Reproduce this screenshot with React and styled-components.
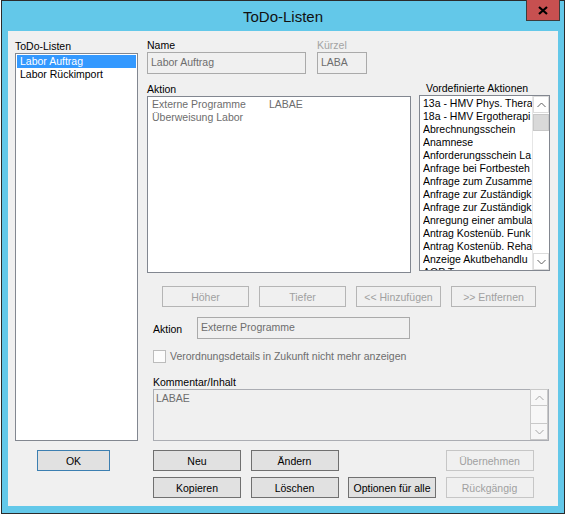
import React from 'react'
import styled, { createGlobalStyle } from 'styled-components'

const todoLists = ['Labor Auftrag', 'Labor Rückimport']

// the list is narrower than the entries, only the visible part is kept
const predefined = [
    '13a - HMV Phys. Thera',
    '18a - HMV Ergotherapi',
    'Abrechnungsschein',
    'Anamnese',
    'Anforderungsschein La',
    'Anfrage bei Fortbesteh',
    'Anfrage zum Zusamme',
    'Anfrage zur Zuständigk',
    'Anfrage zur Zuständigk',
    'Anregung einer ambula',
    'Antrag Kostenüb. Funk',
    'Antrag Kostenüb. Reha',
    'Anzeige Akutbehandlu',
    'AOP T',
]

const actions = [
    { name: 'Externe Programme', code: 'LABAE' },
    { name: 'Überweisung Labor', code: '' },
]

const Chevron = ({ down, color }) => (
    <svg width="9" height="6" viewBox="0 0 9 6">
        <polyline
            points={down ? '0.5,1 4.5,5 8.5,1' : '0.5,5 4.5,1 8.5,5'}
            fill="none"
            stroke={color}
            strokeWidth="1"
        />
    </svg>
)

const App = () => {
    return (
        <>
            <GlobalStyle />
            <Window>
                <TitleBar>
                    <span />
                    <Title>ToDo-Listen</Title>
                    <CloseButton>
                        <svg width="10" height="9" viewBox="0 0 10 9">
                            <path d="M1 1 L9 8 M9 1 L1 8" stroke="#000" strokeWidth="2.2" />
                        </svg>
                    </CloseButton>
                </TitleBar>
                <Client>
                    <Column>
                        <Label lh={14}>ToDo-Listen</Label>
                        <ListBox h={388} pad="1px">
                            {todoLists.map((item, i) => (
                                <TodoItem key={item} selected={i === 0}>{item}</TodoItem>
                            ))}
                        </ListBox>
                    </Column>

                    <Column>
                        <Row>
                            <Column>
                                <Label>Name</Label>
                                <TextBox w={159}>Labor Auftrag</TextBox>
                            </Column>
                            <Column style={{ marginLeft: 11 }}>
                                <Label disabled>Kürzel</Label>
                                <TextBox w={50}>LABA</TextBox>
                            </Column>
                        </Row>

                        <Row mt={8}>
                            <Column>
                                <Label lh={14}>Aktion</Label>
                                <ListBox w={264} h={177} pad="1px 4px">
                                    {actions.map((a) => (
                                        <ActionItem key={a.name}>
                                            <ActionName>{a.name}</ActionName>
                                            <span>{a.code}</span>
                                        </ActionItem>
                                    ))}
                                </ListBox>
                            </Column>
                            <Column style={{ marginLeft: 8 }}>
                                <Label style={{ paddingLeft: 7 }}>Vordefinierte Aktionen</Label>
                                <ListBox w={131} h={176} flex>
                                    <ListContent>
                                        {predefined.map((p, i) => (
                                            <Item key={i}>{p}</Item>
                                        ))}
                                    </ListContent>
                                    <ScrollBar>
                                        <ArrowCell><Chevron color="#606060" /></ArrowCell>
                                        <Thumb />
                                        <Track />
                                        <ArrowCell><Chevron down color="#606060" /></ArrowCell>
                                    </ScrollBar>
                                </ListBox>
                            </Column>
                        </Row>

                        <MoveButtons>
                            <Button disabled w={87}>Höher</Button>
                            <Button disabled w={87}>Tiefer</Button>
                            <Button disabled w={85}>&lt;&lt; Hinzufügen</Button>
                            <Button disabled w={85}>&gt;&gt; Entfernen</Button>
                        </MoveButtons>

                        <IndentRow mt={10}>
                            <InlineLabel>Aktion</InlineLabel>
                            <TextBox w={213}>Externe Programme</TextBox>
                        </IndentRow>

                        <IndentRow mt={11}>
                            <CheckBox />
                            <CheckLabel>Verordnungsdetails in Zukunft nicht mehr anzeigen</CheckLabel>
                        </IndentRow>

                        <Indent>
                            <Label>Kommentar/Inhalt</Label>
                            <CommentBox>
                                <CommentText>LABAE</CommentText>
                                <CommentScroll>
                                    <CommentCell><Chevron color="#a6a6a6" /></CommentCell>
                                    <CommentCell grow />
                                    <CommentCell><Chevron down color="#a6a6a6" /></CommentCell>
                                </CommentScroll>
                            </CommentBox>
                        </Indent>
                    </Column>

                    <div>
                        <OkButton>OK</OkButton>
                    </div>

                    <BottomButtons>
                        <Button>Neu</Button>
                        <Button>Ändern</Button>
                        <span />
                        <Button disabled light>Übernehmen</Button>
                        <Button>Kopieren</Button>
                        <Button>Löschen</Button>
                        <Button>Optionen für alle</Button>
                        <Button disabled light>Rückgängig</Button>
                    </BottomButtons>
                </Client>
            </Window>
        </>
    )
}

export default App

const GlobalStyle = createGlobalStyle`
  html, body {
    margin: 0;
    padding: 0;
    background: #ffffff;
  }
  body {
    font-family: "Liberation Sans", Arial, sans-serif;
    font-size: 10.5px;
    color: #000;
  }
  * { box-sizing: border-box; }
`

const Window = styled.div`
    margin-left: 1px;
    width: 564px;
    height: 514px;
    border: 1px solid #2b2b2b;
    background: #63c8e9;
    padding: 0 6px 7px 6px;
    display: flex;
    flex-direction: column;
`

const TitleBar = styled.div`
    height: 30px;
    margin: 0 -6px;
    display: grid;
    grid-template-columns: 1fr auto 1fr;
    align-items: start;
`

const Title = styled.div`
    font-size: 15px;
    line-height: 30px;
    color: #111;
    padding-top: 1px;
`

const CloseButton = styled.div`
    justify-self: end;
    margin-top: -1px;
    margin-right: 4px;
    width: 34px;
    height: 21px;
    background: #c75050;
    border: 1px solid #3c3c3c;
    border-top: none;
    display: flex;
    align-items: center;
    justify-content: center;
`

const Client = styled.div`
    height: 475px;
    background: #f0f0f0;
    padding: 8px 8px 0 7px;
    display: grid;
    grid-template-columns: 123px 403px;
    grid-template-rows: 402px 48px;
    column-gap: 9px;
    row-gap: 9px;
`

const Column = styled.div`
    display: flex;
    flex-direction: column;
`

const Row = styled.div`
    display: flex;
    margin-top: ${(p) => p.mt || 0}px;
`

const Label = styled.div`
    line-height: ${(p) => p.lh || 13}px;
    height: ${(p) => p.lh || 13}px;
    color: ${(p) => (p.disabled ? '#a3a3a3' : '#000')};
    white-space: nowrap;
`

const ListBox = styled.div`
    width: ${(p) => (p.w ? `${p.w}px` : 'auto')};
    height: ${(p) => p.h}px;
    border: 1px solid #828790;
    background: #fff;
    padding: ${(p) => p.pad || '0'};
    display: ${(p) => (p.flex ? 'flex' : 'block')};
    overflow: hidden;
`

const TodoItem = styled.div`
    height: 13px;
    line-height: 13px;
    padding-left: 3px;
    background: ${(p) => (p.selected ? '#3399ff' : 'transparent')};
    color: ${(p) => (p.selected ? '#fff' : '#000')};
    white-space: nowrap;
`

const ActionItem = styled.div`
    display: flex;
    height: 13px;
    line-height: 13px;
    color: #6d6d6d;
    white-space: nowrap;
`

const ActionName = styled.span`
    width: 117px;
`

const ListContent = styled.div`
    flex: 1;
    overflow: hidden;
    padding: 1px 0 0 3px;
`

const Item = styled.div`
    height: 13px;
    line-height: 13px;
    white-space: nowrap;
    overflow: hidden;
    color: #000;
`

const ScrollBar = styled.div`
    width: 17px;
    display: flex;
    flex-direction: column;
    background: #fff;
    border-left: 1px solid #e6e6e6;
`

const ArrowCell = styled.div`
    height: 17px;
    display: flex;
    align-items: center;
    justify-content: center;
    border: 1px solid #dcdcdc;
    background: #fff;
`

const Thumb = styled.div`
    height: 17px;
    margin-top: 1px;
    background: #d9d9d9;
    border: 1px solid #c8c8c8;
`

const Track = styled.div`
    flex: 1;
`

const TextBox = styled.div`
    width: ${(p) => p.w}px;
    height: 22px;
    border: 1px solid #aaaaaa;
    background: #f0f0f0;
    color: #6d6d6d;
    padding: 3px 3px 0;
    line-height: 13px;
    white-space: nowrap;
`

const MoveButtons = styled.div`
    display: flex;
    gap: 10px;
    margin: 13px 0 0 15px;
`

const Button = styled.div`
    width: ${(p) => (p.w ? `${p.w}px` : 'auto')};
    height: 21px;
    display: flex;
    align-items: center;
    justify-content: center;
    white-space: nowrap;
    background: ${(p) => (p.disabled ? '#f0f0f0' : '#e1e1e1')};
    border: 1px solid ${(p) => (p.disabled ? (p.light ? '#c6c6c6' : '#b5b5b5') : '#707070')};
    color: ${(p) => (p.disabled ? '#a0a0a0' : '#000')};
`

const OkButton = styled.div`
    margin-left: 22px;
    width: 73px;
    height: 21px;
    display: flex;
    align-items: center;
    justify-content: center;
    background: #e1e1e1;
    border: 1px solid #3c7fb1;
`

const IndentRow = styled.div`
    display: flex;
    align-items: center;
    margin: ${(p) => p.mt || 0}px 0 0 6px;
`

const InlineLabel = styled.div`
    width: 44px;
    padding-top: 2px;
`

const CheckBox = styled.div`
    width: 13px;
    height: 13px;
    border: 1px solid #bcbcbc;
    background: #fcfcfc;
`

const CheckLabel = styled.div`
    margin-left: 4px;
    color: #6d6d6d;
    line-height: 13px;
    white-space: nowrap;
`

const Indent = styled.div`
    display: flex;
    flex-direction: column;
    margin: 13px 0 0 6px;
`

const CommentBox = styled.div`
    width: 396px;
    height: 52px;
    border: 1px solid #abadb3;
    background: #f0f0f0;
    display: flex;
`

const CommentText = styled.div`
    flex: 1;
    padding: 2px 2px 0;
    line-height: 13px;
    color: #6d6d6d;
`

const CommentScroll = styled.div`
    width: 18px;
    display: flex;
    flex-direction: column;
`

const CommentCell = styled.div`
    height: ${(p) => (p.grow ? 'auto' : '17px')};
    flex: ${(p) => (p.grow ? 1 : 'none')};
    display: flex;
    align-items: center;
    justify-content: center;
    border: 1px solid #c9c9c9;
    margin-top: -1px;
    background: #f7f7f7;
`

const BottomButtons = styled.div`
    display: grid;
    grid-template-columns: 88px 88px 88px 88px;
    grid-auto-rows: 21px;
    column-gap: 9.5px;
    row-gap: 6px;
    padding-left: 6px;
`
